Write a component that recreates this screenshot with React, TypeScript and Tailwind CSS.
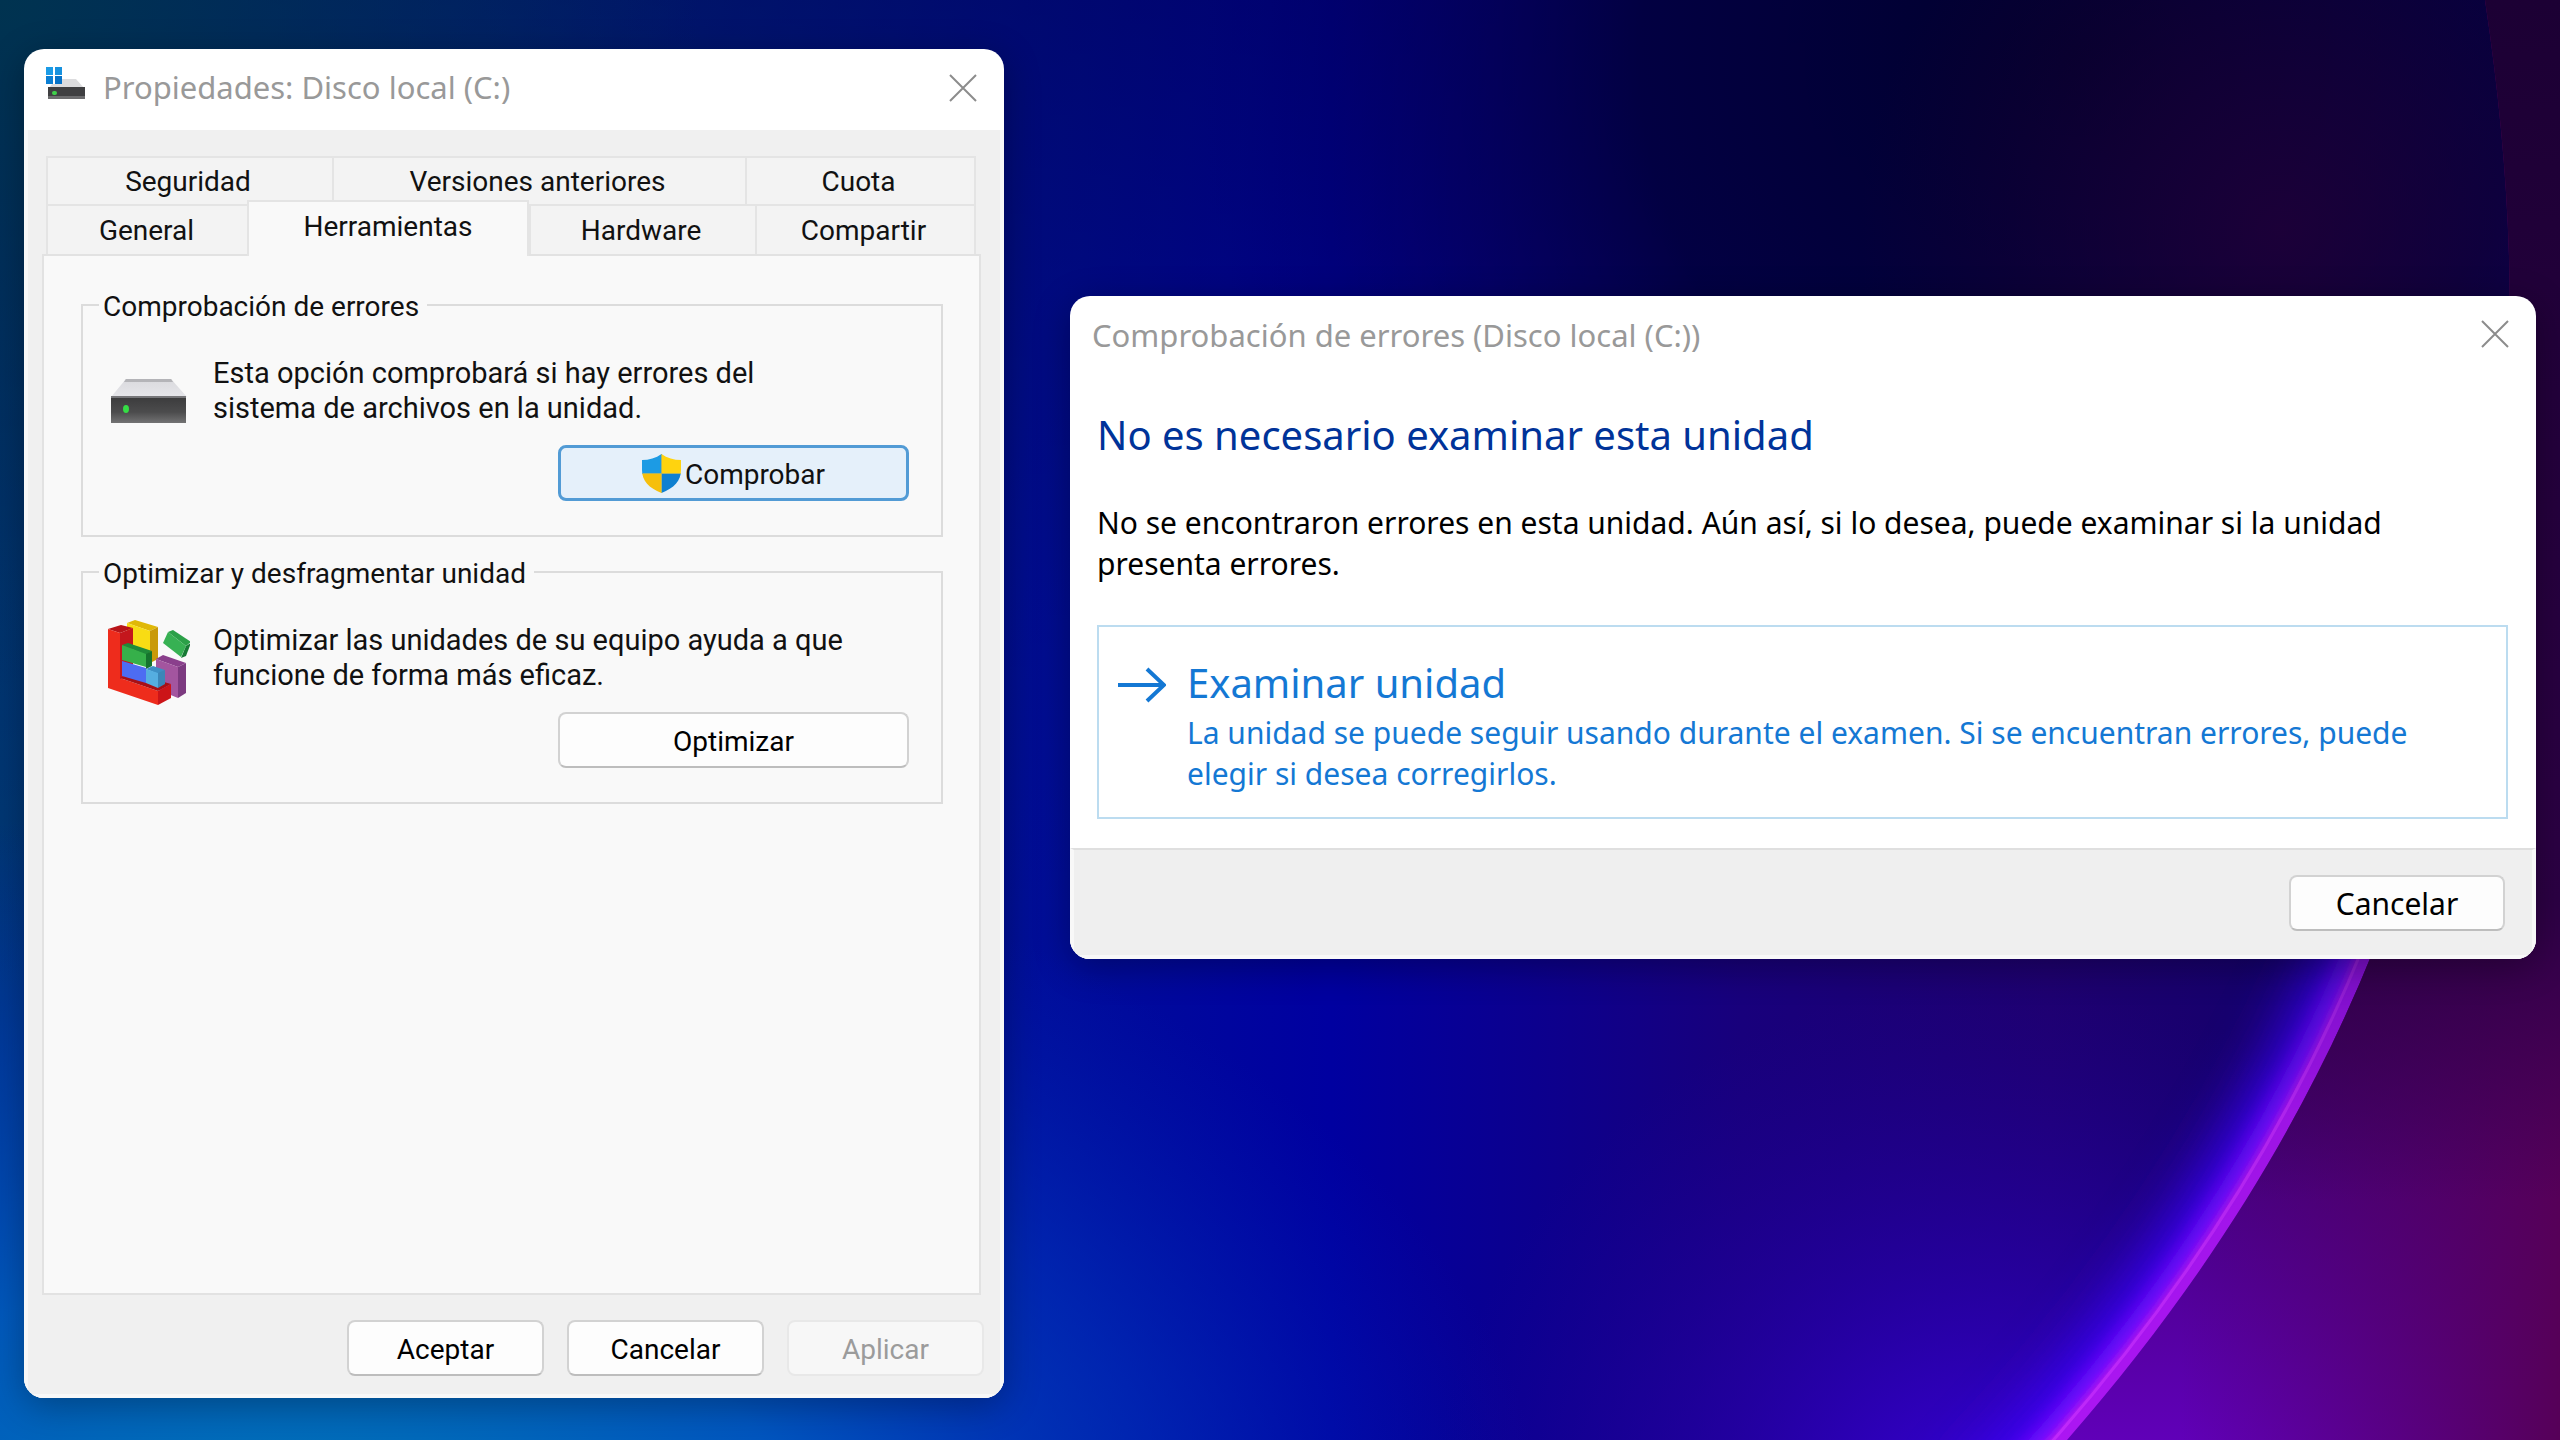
import type { ReactNode } from "react";

const UPPER_TABS = ["Seguridad", "Versiones anteriores", "Cuota"];
const LOWER_TABS = ["General", "Herramientas", "Hardware", "Compartir"];
const ACTIVE_TAB = "Herramientas";

function Wallpaper() {
  const rim = "M2485 0 C2530 300 2520 560 2400 880 C2330 1080 2220 1265 2067 1440 L1990 1525";
  return (
    <svg
      className="absolute inset-0 w-full h-full"
      viewBox="0 0 2560 1440"
      preserveAspectRatio="none"
      aria-hidden="true"
    >
      <defs>
        <linearGradient id="base" x1="0" y1="0" x2="2560" y2="0" gradientUnits="userSpaceOnUse">
          <stop offset="0" stopColor="#003a78" />
          <stop offset="0.2" stopColor="#002a8a" />
          <stop offset="0.4" stopColor="#000f9a" />
          <stop offset="0.52" stopColor="#0000a0" />
          <stop offset="0.68" stopColor="#18007c" />
          <stop offset="0.8" stopColor="#1e0070" />
          <stop offset="0.94" stopColor="#10006a" />
        </linearGradient>
        <linearGradient id="shade" x1="0" y1="0" x2="0" y2="1000" gradientUnits="userSpaceOnUse">
          <stop offset="0" stopColor="#000030" stopOpacity="0.4" />
          <stop offset="0.6" stopColor="#000030" stopOpacity="0.12" />
          <stop offset="1" stopColor="#000030" stopOpacity="0" />
        </linearGradient>
        <radialGradient id="night" cx="2080" cy="60" r="880" gradientUnits="userSpaceOnUse">
          <stop offset="0" stopColor="#00002c" />
          <stop offset="0.5" stopColor="#00003c" stopOpacity="0.85" />
          <stop offset="1" stopColor="#00006a" stopOpacity="0" />
        </radialGradient>
        <radialGradient id="plum" cx="2280" cy="230" r="420" gradientUnits="userSpaceOnUse">
          <stop offset="0" stopColor="#220038" stopOpacity="0.8" />
          <stop offset="1" stopColor="#200038" stopOpacity="0" />
        </radialGradient>
        <radialGradient id="teal" cx="0" cy="0" r="700" gradientUnits="userSpaceOnUse">
          <stop offset="0" stopColor="#003350" />
          <stop offset="1" stopColor="#00305a" stopOpacity="0" />
        </radialGradient>
        <radialGradient
          id="azure"
          cx="0"
          cy="0"
          r="1"
          gradientUnits="userSpaceOnUse"
          gradientTransform="translate(300 1560) scale(1250 760)"
        >
          <stop offset="0" stopColor="#007ab8" />
          <stop offset="0.4" stopColor="#005cc4" stopOpacity="0.9" />
          <stop offset="0.7" stopColor="#003cc4" stopOpacity="0.5" />
          <stop offset="1" stopColor="#0020b8" stopOpacity="0" />
        </radialGradient>
        <radialGradient id="indigo" cx="1990" cy="1540" r="560" gradientUnits="userSpaceOnUse">
          <stop offset="0" stopColor="#4000f0" stopOpacity="0.9" />
          <stop offset="0.5" stopColor="#2c00c0" stopOpacity="0.5" />
          <stop offset="1" stopColor="#2000a0" stopOpacity="0" />
        </radialGradient>
        <linearGradient id="outer" x1="0" y1="880" x2="0" y2="1440" gradientUnits="userSpaceOnUse">
          <stop offset="0" stopColor="#2c0045" />
          <stop offset="0.45" stopColor="#42007a" />
          <stop offset="1" stopColor="#6000b8" />
        </linearGradient>
        <linearGradient id="wine" x1="2180" y1="0" x2="2560" y2="0" gradientUnits="userSpaceOnUse">
          <stop offset="0" stopColor="#500060" stopOpacity="0" />
          <stop offset="1" stopColor="#560058" />
        </linearGradient>
        <linearGradient id="dusk" x1="0" y1="0" x2="0" y2="1200" gradientUnits="userSpaceOnUse">
          <stop offset="0" stopColor="#1c0034" />
          <stop offset="0.75" stopColor="#2c0044" />
          <stop offset="1" stopColor="#300050" stopOpacity="0" />
        </linearGradient>
        <linearGradient id="fade" x1="0" y1="900" x2="0" y2="1440" gradientUnits="userSpaceOnUse">
          <stop offset="0" stopColor="#fff" stopOpacity="0.6" />
          <stop offset="0.4" stopColor="#fff" stopOpacity="0.9" />
          <stop offset="1" stopColor="#fff" />
        </linearGradient>
        <mask id="glowMask" maskUnits="userSpaceOnUse" x="1600" y="860" width="960" height="580">
          <rect x="1600" y="860" width="960" height="580" fill="url(#fade)" />
        </mask>
        <filter id="wide" filterUnits="userSpaceOnUse" x="1500" y="0" width="1060" height="1600">
          <feGaussianBlur stdDeviation="26" />
        </filter>
        <filter id="soft" filterUnits="userSpaceOnUse" x="1500" y="0" width="1060" height="1600">
          <feGaussianBlur stdDeviation="10" />
        </filter>
        <filter id="slight" filterUnits="userSpaceOnUse" x="1500" y="0" width="1060" height="1600">
          <feGaussianBlur stdDeviation="3" />
        </filter>
      </defs>
      <rect width="2560" height="1440" fill="url(#base)" />
      <rect width="2560" height="1440" fill="url(#shade)" />
      <rect width="2560" height="1440" fill="url(#night)" />
      <rect width="2560" height="1440" fill="url(#plum)" />
      <rect width="2560" height="1440" fill="url(#teal)" />
      <rect width="2560" height="1440" fill="url(#azure)" />
      <rect width="2560" height="1440" fill="url(#indigo)" />
      <g mask="url(#glowMask)" fill="none">
        <path d={rim} stroke="#3a00f0" strokeWidth="110" filter="url(#wide)" />
        <path d={rim} stroke="#7a08ff" strokeWidth="58" filter="url(#soft)" />
        <path d={rim} stroke="#ac12f2" strokeWidth="30" filter="url(#slight)" />
        <path d={rim} stroke="#c028fa" strokeWidth="3" transform="translate(-10 -4)" />
      </g>
      <path d={`${rim} L2560 1525 L2560 0 Z`} fill="url(#outer)" />
      <path d={`${rim} L2560 1525 L2560 0 Z`} fill="url(#wine)" />
      <path d={`${rim} L2560 1525 L2560 0 Z`} fill="url(#dusk)" />
    </svg>
  );
}

function DriveTitleIcon() {
  return (
    <svg className="w-[40px] h-[42px] shrink-0" viewBox="0 0 40 42" aria-hidden="true">
      <path d="M10 12 H30 L38 21 H3 Z" fill="#dcdcde" />
      <rect x="2" y="20" width="37" height="12" fill="#3f3f41" />
      <rect x="2" y="29" width="37" height="3" fill="#6c6c6e" />
      <rect x="6" y="24" width="5" height="4" rx="2" fill="#3fd04a" />
      <path d="M0 0 H16 V17 H0 Z" fill="#fff" />
      <rect x="0" y="0" width="7" height="8" fill="#1b9be6" />
      <rect x="9" y="0" width="7" height="8" fill="#1791de" />
      <rect x="0" y="9" width="7" height="8" fill="#0c7fd4" />
      <rect x="9" y="9" width="7" height="8" fill="#0672c8" />
    </svg>
  );
}

function DriveIcon() {
  return (
    <svg className="w-[82px] h-[86px] shrink-0 -mt-1 -mb-3" viewBox="0 0 82 86" aria-hidden="true">
      <defs>
        <linearGradient id="driveTop" x1="0" y1="0" x2="0" y2="1">
          <stop offset="0" stopColor="#c8c8cb" />
          <stop offset="0.2" stopColor="#dcdce0" />
          <stop offset="1" stopColor="#e6e6ea" />
        </linearGradient>
        <linearGradient id="driveFront" x1="0" y1="0" x2="0" y2="1">
          <stop offset="0" stopColor="#3a3a3b" />
          <stop offset="0.6" stopColor="#4c4c4d" />
          <stop offset="1" stopColor="#737374" />
        </linearGradient>
      </defs>
      <path d="M18 27 H63 L79 45 H3 Z" fill="url(#driveTop)" />
      <path d="M18 27 H63 L65 30 H16 Z" fill="#b4b4b8" />
      <rect x="3" y="44" width="75" height="27" fill="url(#driveFront)" />
      <rect x="3" y="44" width="75" height="2" fill="#77777a" />
      <ellipse cx="18" cy="57" rx="3" ry="4" fill="#35dd45" />
    </svg>
  );
}

function DefragIcon() {
  return (
    <svg className="w-[82px] h-[86px] shrink-0 -mt-1 -mb-3" viewBox="0 0 82 86" aria-hidden="true">
      {/* yellow */}
      <path d="M19 4 L27 1 L50 8 L42 12 Z" fill="#e0b808" />
      <path d="M19 4 L42 12 V44 L19 36 Z" fill="#f8dc14" />
      <path d="M42 12 L50 8 V40 L42 44 Z" fill="#c99a0a" />
      {/* purple */}
      <path d="M48 40 L55 36 L78 44 L70 48 Z" fill="#8a3f8c" />
      <path d="M48 40 L70 48 V79 L48 70 Z" fill="#a3559f" />
      <path d="M70 48 L78 44 V74 L70 79 Z" fill="#7c3a80" />
      {/* red */}
      <path d="M0 10 L13 6 L25 9 L12 14 Z" fill="#b81418" />
      <path d="M0 10 L12 14 V59 L50 72 V86 L0 69 Z" fill="#ee2c1c" />
      <path d="M12 14 L25 9 V56 L12 60 Z" fill="#c4161c" />
      <path d="M12 59 L24 54 L63 65 L50 72 Z" fill="#a80f14" />
      <path d="M50 72 L63 65 V79 L50 86 Z" fill="#cc1418" />
      {/* green, blue and cyan blocks */}
      <path d="M14 26 L20 24 L44 32 L38 36 Z" fill="#1f8a3a" />
      <path d="M14 26 L38 35 V48 L14 41 Z" fill="#36b04a" />
      <path d="M38 35 L44 32 V47 L38 50 Z" fill="#15732e" />
      <path d="M14 42 L38 49 V64 L14 57 Z" fill="#4d6cf2" />
      <path d="M38 50 L45 47 L57 51 L50 55 Z" fill="#3d8fc4" />
      <path d="M38 50 L50 54 V69 L38 64 Z" fill="#55aee0" />
      <path d="M50 54 L57 51 V65 L50 69 Z" fill="#3b86b8" />
      {/* loose green block */}
      <path d="M60 13 L65 11 L83 23 L78 27 Z" fill="#2ba048" />
      <path d="M60 13 L78 27 L73 38 L55 24 Z" fill="#37b153" />
      <path d="M78 27 L83 24 L78 37 L73 39 Z" fill="#167a34" />
    </svg>
  );
}

function ShieldIcon() {
  return (
    <svg className="w-[39px] h-[39px] shrink-0" viewBox="0 0 39 39" aria-hidden="true">
      <clipPath id="shield">
        <path d="M19.500 0 C14 4 7 6 0 6 V16 C0 27 7 34 19.500 39 C32 34 39 27 39 16 V6 C32 6 25 4 19.500 0 Z" />
      </clipPath>
      <g clipPath="url(#shield)">
        <rect width="20" height="20" fill="#1c9be4" />
        <rect x="20" width="19" height="20" fill="#ffd30f" />
        <rect y="20" width="20" height="19" fill="#f6bf0c" />
        <rect x="20" y="20" width="19" height="19" fill="#0f80d0" />
        <path d="M19.500 0 V39 M0 19.500 H39" stroke="#a9b46a" strokeWidth="1" />
      </g>
    </svg>
  );
}

function CloseButton() {
  return (
    <button type="button" aria-label="Cerrar" className="ml-auto shrink-0 text-[#8c8c8c]">
      <svg className="w-7 h-7" viewBox="0 0 28 28" fill="none" stroke="currentColor" strokeWidth="2">
        <path d="M1 1 L27 27 M27 1 L1 27" />
      </svg>
    </button>
  );
}

interface PushButtonProps {
  children: ReactNode;
  className: string;
  disabled?: boolean;
}

function PushButton({ children, className, disabled }: PushButtonProps) {
  return (
    <button
      type="button"
      disabled={disabled}
      className={`h-[56px] rounded-lg border-2 border-[#d2d2d2] border-b-[#bdbdbd] bg-[#fdfdfd] text-black disabled:border-[#e8e8e8] disabled:bg-[#f7f7f7] disabled:text-[#9b9b9b] ${className}`}
    >
      {children}
    </button>
  );
}

function Tab({ name }: { name: string }) {
  const active = name === ACTIVE_TAB;
  return (
    <button
      type="button"
      role="tab"
      aria-selected={active}
      className={
        active
          ? "relative z-10 -mt-1 -mb-0.5 -ml-0.5 pb-1 border-2 border-b-0 border-[#e4e4e4] bg-[#f9f9f9]"
          : "pt-0.5 pr-1 border-t-2 border-l-2 border-[#e4e4e4] bg-[#f3f3f3] last:border-r-2"
      }
    >
      {name}
    </button>
  );
}

interface ToolGroupProps {
  legend: string;
  icon: ReactNode;
  text: ReactNode;
  action: ReactNode;
}

function ToolGroup({ legend, icon, text, action }: ToolGroupProps) {
  return (
    <fieldset className="border-2 border-[#dcdcdc] pb-[34px]">
      <legend className="ml-4 pl-1 pr-2 pt-1 leading-9">{legend}</legend>
      <div className="flex items-start gap-[23px] pt-[31px] pl-[25px]">
        {icon}
        <p className="text-[29px] leading-[35px]">{text}</p>
      </div>
      <div className="flex justify-end pt-[19px] pr-8">{action}</div>
    </fieldset>
  );
}

function PropertiesWindow() {
  return (
    <section
      aria-label="Propiedades: Disco local (C:)"
      className="flex flex-col rounded-[20px] overflow-hidden bg-white shadow-[0_8px_36px_rgba(0,0,0,0.3)]"
    >
      <header className="flex items-center h-[81px] pl-[22px] pr-[27px] pb-1 gap-[17px]">
        <DriveTitleIcon />
        <h1 className="font-['Noto_Sans',sans-serif] text-[31px] text-[#999999] whitespace-nowrap">
          Propiedades: Disco local (C:)
        </h1>
        <CloseButton />
      </header>

      <div className="flex-1 flex flex-col bg-[#f0f0f0] border-x-4 border-b-4 border-[#f8f8f8] pt-[26px] pl-[14px] pr-[19px] text-[28px]">
        <div role="tablist" className="pl-1 pr-[5px]">
          <div className="grid grid-cols-[286fr_413fr_231fr] h-[48px]">
            {UPPER_TABS.map((t) => <Tab key={t} name={t} />)}
          </div>
          <div className="grid grid-cols-[203fr_280fr_226fr_221fr] h-[50px]">
            {LOWER_TABS.map((t) => <Tab key={t} name={t} />)}
          </div>
        </div>

        <div role="tabpanel" className="flex-1 flex flex-col gap-[15px] border-2 border-[#e2e2e2] bg-[#f9f9f9] pt-[29px] pl-[37px] pr-9">
          <ToolGroup
            legend="Comprobación de errores"
            icon={<DriveIcon />}
            text={<>Esta opción comprobará si hay errores del<br />sistema de archivos en la unidad.</>}
            action={
              <button
                type="button"
                className="flex items-center justify-center gap-1 w-[351px] h-[56px] rounded-lg border-3 border-[#529bd5] bg-[#e5f0fa]"
              >
                <ShieldIcon />
                <span className="pt-1">Comprobar</span>
              </button>
            }
          />
          <ToolGroup
            legend="Optimizar y desfragmentar unidad"
            icon={<DefragIcon />}
            text={<>Optimizar las unidades de su equipo ayuda a que<br />funcione de forma más eficaz.</>}
            action={<PushButton className="w-[351px] pt-1">Optimizar</PushButton>}
          />
        </div>

        <footer className="flex justify-end gap-[23px] pt-[25px] pb-[18px] -mr-[3px]">
          <PushButton className="w-[197px] pt-1">Aceptar</PushButton>
          <PushButton className="w-[197px] pt-1">Cancelar</PushButton>
          <PushButton className="w-[197px] pt-1" disabled>Aplicar</PushButton>
        </footer>
      </div>
    </section>
  );
}

function ErrorCheckDialog() {
  return (
    <section
      role="dialog"
      aria-label="Comprobación de errores (Disco local (C:))"
      className="mt-[247px] rounded-[20px] overflow-hidden bg-white font-['Noto_Sans',sans-serif] text-[30px] leading-[41px] shadow-[0_8px_36px_rgba(0,0,0,0.3)]"
    >
      <header className="flex items-center h-[76px] pl-[22px] pr-[27px]">
        <h2 className="text-[31px] text-[#999999] pt-0.5">Comprobación de errores (Disco local (C:))</h2>
        <CloseButton />
      </header>

      <div className="pt-9 pb-[29px] pl-[27px] pr-7">
        <h3 className="text-[40px] leading-[54px] text-[#003399]">No es necesario examinar esta unidad</h3>
        <p className="mt-10 text-black">
          No se encontraron errores en esta unidad. Aún así, si lo desea, puede examinar si la unidad
          presenta errores.
        </p>
        <button
          type="button"
          className="flex items-start gap-[21px] w-full mt-[41px] pt-[30px] pb-[23px] pl-[19px] pr-7 border-2 border-[#bcdcf0] text-left text-[#1478d4]"
        >
          <svg className="w-12 h-9 shrink-0 mt-2.5" viewBox="0 0 48 36" fill="none" stroke="currentColor" strokeWidth="4" aria-hidden="true">
            <path d="M0 18 H45 M29 2 L46 18 L29 34" />
          </svg>
          <span className="flex flex-col gap-[3px]">
            <span className="text-[40px] leading-[52px]">Examinar unidad</span>
            <span>
              La unidad se puede seguir usando durante el examen. Si se encuentran errores, puede
              elegir si desea corregirlos.
            </span>
          </span>
        </button>
      </div>

      <footer className="flex justify-end pt-[25px] pb-6 pr-[27px] border-t-2 border-t-[#dfdfdf] border-x-4 border-b-4 border-[#f8f8f8] bg-[#efefef]">
        <PushButton className="w-[216px]">Cancelar</PushButton>
      </footer>
    </section>
  );
}

export default function App() {
  return (
    <main className="relative min-h-screen grid grid-cols-[980fr_1466fr] gap-[66px] px-6 pt-[49px] pb-[42px] overflow-hidden bg-[#00007a] font-[Roboto,sans-serif] text-[#111111]">
      <Wallpaper />
      <div className="relative flex flex-col *:flex-1">
        <PropertiesWindow />
      </div>
      <div className="relative">
        <ErrorCheckDialog />
      </div>
    </main>
  );
}
